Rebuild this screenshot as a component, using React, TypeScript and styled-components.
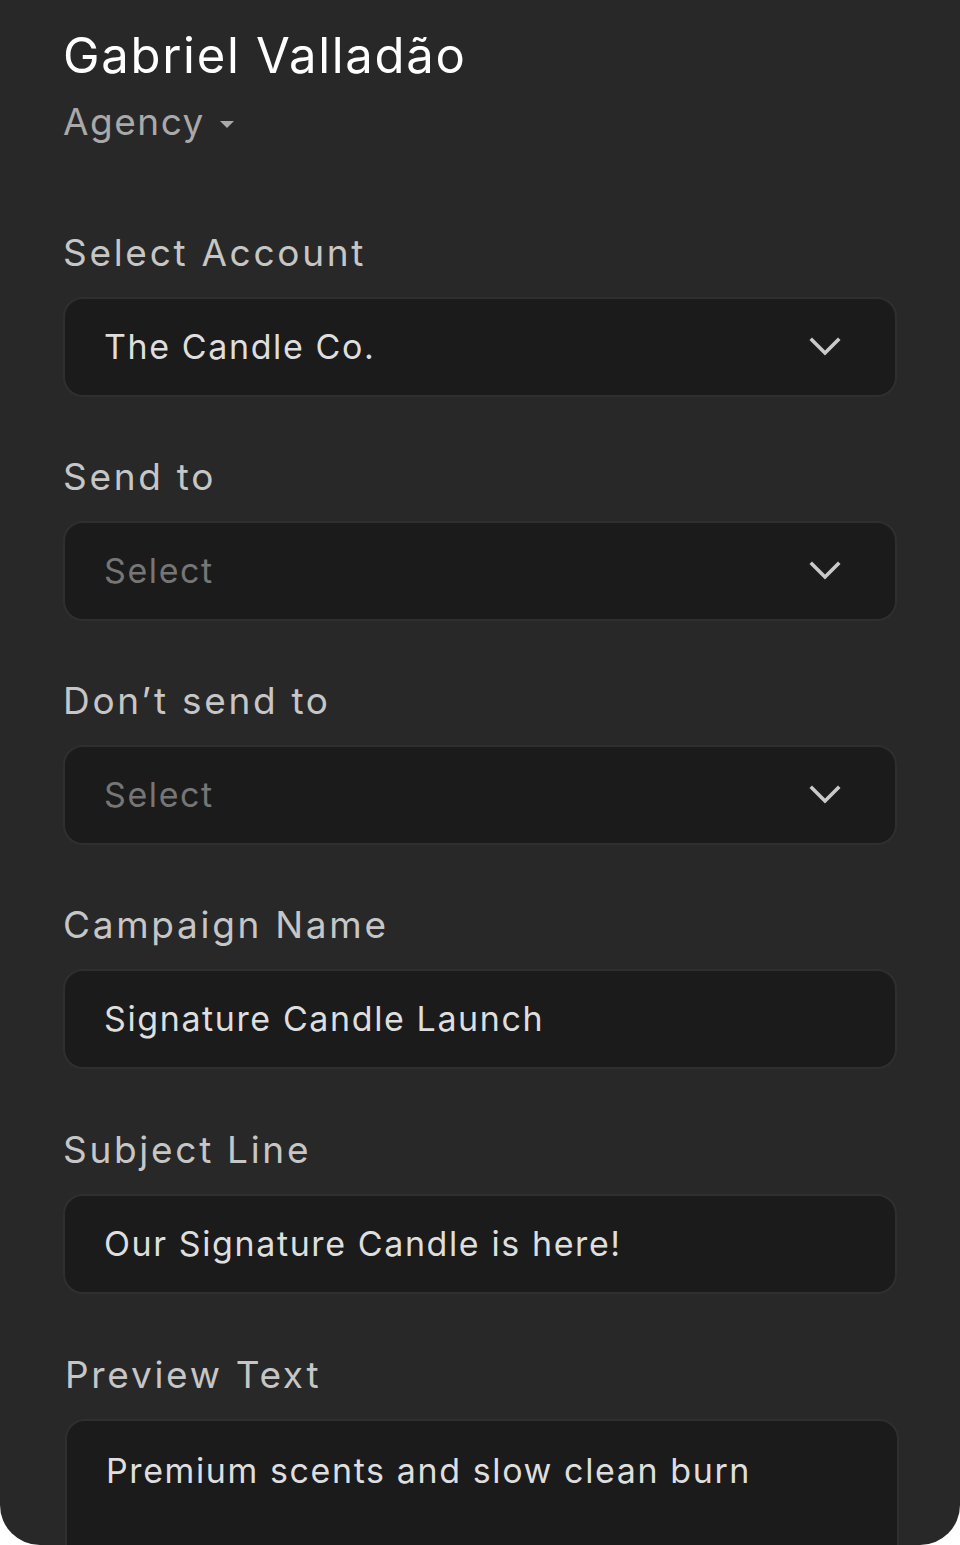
import React from "react";
import styled, { createGlobalStyle } from "styled-components";

const GlobalStyle = createGlobalStyle`
  html, body { margin: 0; padding: 0; background: #ffffff; }
  * { box-sizing: border-box; }
`;

const Panel = styled.div`
  width: 960px;
  height: 1545px;
  background: #282828;
  border-radius: 0 0 40px 40px;
  overflow: hidden;
  padding: 28px 63px 0 63px;
  font-family: "Inter", "Open Sans", sans-serif;
  display: flex;
  flex-direction: column;
`;

const Name = styled.h1`
  margin: 0;
  font-size: 49px;
  line-height: 56px;
  font-weight: 400;
  color: #ffffff;
  letter-spacing: 1.7px;
`;

const RoleRow = styled.div`
  margin-top: 16px;
  display: flex;
  align-items: center;
  gap: 15px;
  height: 44px;
`;

const Role = styled.span`
  font-size: 37px;
  line-height: 44px;
  color: #a9a9a9;
  letter-spacing: 1.5px;
`;

const Caret = styled.span`
  width: 0;
  height: 0;
  border-left: 7px solid transparent;
  border-right: 7px solid transparent;
  border-top: 7px solid #a9a9a9;
  margin-top: 4px;
`;

const Form = styled.div`
  margin-top: 87px;
  display: flex;
  flex-direction: column;
  gap: 58px;
`;

const Field = styled.div<{ $shift?: number; $drop?: number }>`
  display: flex;
  flex-direction: column;
  gap: 22px;
  margin-top: ${(p) => p.$drop ?? 0}px;
  margin-left: ${(p) => p.$shift ?? 0}px;
  margin-right: ${(p) => -(p.$shift ?? 0)}px;
`;

const Label = styled.label`
  font-size: 37px;
  line-height: 44px;
  color: #c6c6c6;
  letter-spacing: 2.7px;
`;

const Box = styled.div<{ $tall?: boolean }>`
  height: ${(p) => (p.$tall ? "220px" : "100px")};
  background: #1b1b1b;
  border: 2px solid #2f2f2f;
  border-radius: 20px;
  display: flex;
  align-items: ${(p) => (p.$tall ? "flex-start" : "center")};
  justify-content: space-between;
  padding: ${(p) => (p.$tall ? "30px 54px 0 39px" : "0 54px 0 39px")};
`;

const Value = styled.span<{ $placeholder?: boolean }>`
  font-size: 34px;
  line-height: 40px;
  color: ${(p) => (p.$placeholder ? "#767676" : "#dedede")};
  letter-spacing: 1.6px;
`;

const Chevron = () => (
  <svg width="32" height="20" viewBox="0 0 32 20" fill="none">
    <polyline
      points="3,3 16,16 29,3"
      stroke="#c9c9c9"
      strokeWidth="3.6"
      strokeLinecap="square"
      fill="none"
    />
  </svg>
);

type FieldDef = {
  label: string;
  value: string;
  placeholder?: boolean;
  select?: boolean;
  tall?: boolean;
  shift?: number;
  drop?: number;
};

const fields: FieldDef[] = [
  { label: "Select Account", value: "The Candle Co.", select: true },
  { label: "Send to", value: "Select", placeholder: true, select: true },
  { label: "Don\u2019t send to", value: "Select", placeholder: true, select: true },
  { label: "Campaign Name", value: "Signature Candle Launch" },
  { label: "Subject Line", value: "Our Signature Candle is here!", drop: 1 },
  { label: "Preview Text", value: "Premium scents and slow clean burn", tall: true, shift: 2, drop: 1 },
];

export default function App() {
  return (
    <>
      <GlobalStyle />
      <Panel>
        <Name>Gabriel Valladão</Name>
        <RoleRow>
          <Role>Agency</Role>
          <Caret />
        </RoleRow>
        <Form>
          {fields.map((f) => (
            <Field key={f.label} $shift={f.shift} $drop={f.drop}>
              <Label>{f.label}</Label>
              <Box $tall={f.tall}>
                <Value $placeholder={f.placeholder}>{f.value}</Value>
                {f.select && <Chevron />}
              </Box>
            </Field>
          ))}
        </Form>
      </Panel>
    </>
  );
}
